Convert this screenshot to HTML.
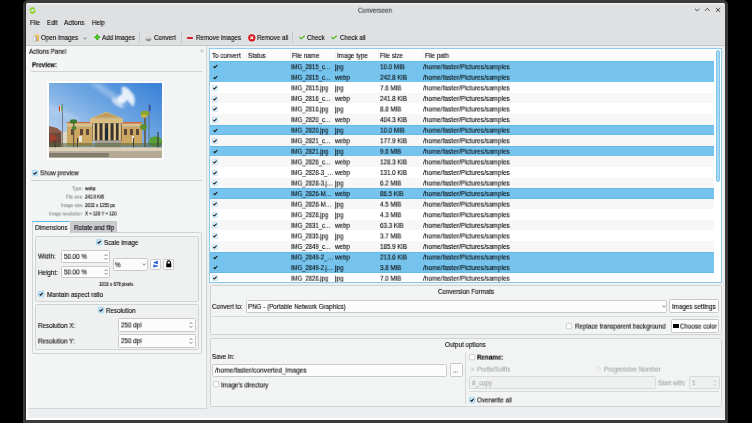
<!DOCTYPE html><html><head><meta charset="utf-8"><style>
html,body{margin:0;padding:0;}
body{width:752px;height:423px;background:#000;position:relative;overflow:hidden;font-family:"Liberation Sans",sans-serif;}
.t{position:absolute;white-space:nowrap;line-height:8px;transform-origin:0 0;will-change:transform;-webkit-text-stroke:0.1px currentColor;}
.r{position:absolute;box-sizing:border-box;}
svg{position:absolute;overflow:visible;}
</style></head><body>
<div class="r" style="left:23.00px;top:0.00px;width:705.00px;height:423.00px;background:#3a3a3a;border-radius:5px 5px 0 0;"></div>
<div class="r" style="left:26.00px;top:3.00px;width:699.00px;height:417.00px;background:#edeef0;border-radius:3px 3px 0 0;"></div>
<div class="r" style="left:26.00px;top:3.00px;width:699.00px;height:42.50px;background:#dfe0e2;border-radius:3px 3px 0 0;"></div>
<div class="r" style="left:26.00px;top:3.00px;width:699.00px;height:2.00px;background:linear-gradient(#f3f4f5,#e2e3e5);border-radius:3px 3px 0 0;"></div>
<div class="r" style="left:26.00px;top:45.00px;width:699.00px;height:1.00px;background:#c6c8c9;"></div>
<div class="r" style="left:26.00px;top:417.80px;width:699.00px;height:2.20px;background:#fcfcfc;"></div>
<div class="t" style="left:358.00px;top:6px;font-size:6.75px;transform:translateY(0.70px) scaleX(0.933);color:#31363b;">Converseen</div>
<svg style="left:29.4px;top:6.6px" width="6.9" height="6.9" viewBox="0 0 8 8"><g stroke="#84d40e" stroke-width="1.9" fill="none"><path d="M1.4 4.6 A2.6 2.6 0 0 1 5.2 1.6"/><path d="M6.6 3.4 A2.6 2.6 0 0 1 2.8 6.4"/></g><path d="M4.4 0 L7.2 1.6 L4.6 3.3Z M3.6 8 L0.8 6.4 L3.4 4.7Z" fill="#84d40e"/></svg>
<svg style="left:694px;top:7px" width="28" height="6" viewBox="0 0 28 6"><path d="M1 1.8 L3.2 3.8 L5.4 1.8" stroke="#474747" stroke-width="0.95" fill="none"/><path d="M11 3.8 L13.3 1.3 L15.6 3.8" stroke="#474747" stroke-width="0.95" fill="none"/><path d="M22 1 L26.2 5 M26.2 1 L22 5" stroke="#474747" stroke-width="0.95" fill="none"/></svg>
<div class="t" style="left:30.20px;top:19px;font-size:6.65px;transform:translateY(0.00px) scaleX(0.933);color:#000;">File</div>
<div class="t" style="left:46.90px;top:19px;font-size:6.65px;transform:translateY(0.00px) scaleX(0.933);color:#000;">Edit</div>
<div class="t" style="left:64.00px;top:19px;font-size:6.65px;transform:translateY(0.00px) scaleX(0.933);color:#000;">Actions</div>
<div class="t" style="left:91.80px;top:19px;font-size:6.65px;transform:translateY(0.00px) scaleX(0.933);color:#000;">Help</div>
<div class="t" style="left:41.00px;top:34px;font-size:6.70px;transform:translateY(0.00px) scaleX(0.933);color:#000;">Open images</div>
<svg style="left:83px;top:36.5px" width="4" height="3" viewBox="0 0 4 3"><path d="M0.3 0.6 L2 2.2 L3.7 0.6" stroke="#555" stroke-width="0.7" fill="none"/></svg>
<div class="t" style="left:101.80px;top:34px;font-size:6.70px;transform:translateY(0.00px) scaleX(0.933);color:#000;">Add images</div>
<div class="t" style="left:153.50px;top:34px;font-size:6.70px;transform:translateY(0.00px) scaleX(0.933);color:#000;">Convert</div>
<div class="t" style="left:195.50px;top:34px;font-size:6.70px;transform:translateY(0.00px) scaleX(0.933);color:#000;">Remove images</div>
<div class="t" style="left:256.80px;top:34px;font-size:6.70px;transform:translateY(0.00px) scaleX(0.933);color:#000;">Remove all</div>
<div class="t" style="left:306.50px;top:34px;font-size:6.70px;transform:translateY(0.00px) scaleX(0.933);color:#000;">Check</div>
<div class="t" style="left:339.90px;top:34px;font-size:6.70px;transform:translateY(0.00px) scaleX(0.933);color:#000;">Check all</div>
<div class="r" style="left:139.00px;top:31.00px;width:0.90px;height:12.00px;background:#c6c7c9;"></div>
<div class="r" style="left:181.30px;top:31.00px;width:0.90px;height:12.00px;background:#c6c7c9;"></div>
<div class="r" style="left:292.30px;top:31.00px;width:0.90px;height:12.00px;background:#c6c7c9;"></div>
<svg style="left:32px;top:33.5px" width="8" height="8" viewBox="0 0 8 8"><defs><linearGradient id="fy" x1="0" y1="0" x2="1" y2="1"><stop offset="0" stop-color="#f7d27a"/><stop offset="1" stop-color="#e9b347"/></linearGradient></defs><rect x="2.2" y="0.6" width="4.8" height="6.6" fill="url(#fy)"/><path d="M1.2 2.6 L4.2 2.6 L4.2 7.2 L1.2 7.2Z" fill="#f4f5f7" stroke="#9a9fa6" stroke-width="0.45"/><rect x="3.9" y="2.2" width="0.6" height="5" fill="#6e7b8c"/></svg>
<svg style="left:93.5px;top:34px" width="6.5" height="6.5" viewBox="0 0 6.5 6.5"><path d="M3.25 1.3 V5.2 M1.3 3.25 H5.2" stroke="#2fae0a" stroke-width="2.0" stroke-linecap="round"/><circle cx="3.25" cy="3.25" r="0.9" fill="#62d92e"/></svg>
<svg style="left:145px;top:34.5px" width="7" height="7" viewBox="0 0 7 7"><path d="M0.8 3.4 A2.7 2.7 0 0 1 6.2 3.4Z" fill="#d8d8d8" opacity="0.7"/><path d="M0.6 3.3 A2.9 2.9 0 0 0 6.4 3.3Z" fill="#8c8c8c"/><ellipse cx="3.5" cy="3.3" rx="2.9" ry="0.9" fill="#c9c9c9"/></svg>
<div class="r" style="left:187.00px;top:36.60px;width:6.20px;height:2.20px;background:#d41f26;border-radius:0.4px;"></div>
<svg style="left:247.5px;top:33.5px" width="8" height="8" viewBox="0 0 8 8"><circle cx="3.8" cy="3.8" r="3.6" fill="#d8121a"/><path d="M2.4 2.4 L5.2 5.2 M5.2 2.4 L2.4 5.2" stroke="#fff" stroke-width="1.1"/></svg>
<svg style="left:298.5px;top:34.5px" width="6" height="5" viewBox="0 0 6 5"><path d="M0.7 2.4 L2.1 3.7 L5.3 1.2" stroke="#46b514" stroke-width="1.2" fill="none" stroke-linecap="round"/></svg>
<svg style="left:331.3px;top:34.5px" width="6" height="5" viewBox="0 0 6 5"><path d="M0.7 2.4 L2.1 3.7 L5.3 1.2" stroke="#46b514" stroke-width="1.2" fill="none" stroke-linecap="round"/></svg>
<div class="r" style="left:26.00px;top:46.00px;width:180.50px;height:362.50px;background:#f3f4f4;border-right:1px solid #d3d5d6;border-bottom:1px solid #d3d5d6;"></div>
<div class="r" style="left:26.00px;top:46.00px;width:3.50px;height:372.00px;background:linear-gradient(to right,#fdfdfd,rgba(243,244,244,0));"></div>
<div class="r" style="left:25.20px;top:3.00px;width:0.90px;height:417.00px;background:#262626;"></div>
<div class="t" style="left:28.80px;top:47px;font-size:6.54px;transform:translateY(0.80px) scaleX(0.933);color:#000;">Actions Panel</div>
<svg style="left:199.5px;top:49px" width="4" height="4" viewBox="0 0 4 4"><path d="M2 0.6 L3.4 2 L2 3.4 L0.6 2Z" fill="none" stroke="#8a8c8e" stroke-width="0.5"/></svg>
<div class="t" style="left:32.00px;top:61px;font-size:6.54px;transform:translateY(0.20px) scaleX(0.933);color:#000;font-weight:bold;">Preview:</div>
<div class="r" style="left:31.00px;top:71.00px;width:171.00px;height:0.80px;background:#d0d2d3;"></div>
<div class="r" style="left:47.30px;top:81.30px;width:116.40px;height:78.40px;background:#fdfdfd;box-shadow:0 0 1px rgba(0,0,0,0.08);"></div>
<svg style="left:49px;top:83px" width="113" height="75" viewBox="0 0 113 75">
<defs>
<linearGradient id="sky" x1="0.9" y1="0" x2="0.2" y2="0.75"><stop offset="0" stop-color="#3d84d8"/><stop offset="0.5" stop-color="#6ea6e2"/><stop offset="1" stop-color="#b0cdee"/></linearGradient>
<filter id="bl" x="-0.5" y="-0.5" width="2" height="2"><feGaussianBlur stdDeviation="1.0"/></filter>
<filter id="bl3" x="-0.5" y="-0.5" width="2" height="2"><feGaussianBlur stdDeviation="2"/></filter>
<filter id="bl2"><feGaussianBlur stdDeviation="0.4"/></filter>
</defs>
<rect width="113" height="75" fill="url(#sky)"/>
<g filter="url(#bl3)" fill="#ffffff" opacity="0.35">
<path d="M40 0 L75 24 L78 20 L50 0Z"/>
<path d="M0 20 L30 35 L30 40 L0 30Z" opacity="0.5"/>
</g>
<g filter="url(#bl)" fill="#ffffff">
<path d="M73 4 C77 3 80 6 82 9 C86 12 87 18 84 24 C82 21 80 19 78 17 C76 20 72 22 70 19 C67 17 68 13 72 12 C74 10 72 7 73 4Z" opacity="0.85"/>
<path d="M64 14 C68 16 72 20 75 25 C71 25 66 22 63 18Z" opacity="0.6"/>
</g>
<g filter="url(#bl2)">
<path d="M0 43 L8 45 L13 49 L13 64 L0 64Z" fill="#8a5a48"/>
<rect x="0" y="50" width="12" height="14" fill="#6a4a3c"/>
<path d="M1 52 Q4 50 7 53 Q9 56 6 58 L1 58Z" fill="#b83a2a" opacity="0.7"/>
<rect x="12.5" y="49" width="6" height="15" fill="#ddd6c8"/>
<rect x="18" y="39" width="25.5" height="1.6" fill="#cf6a3a"/>
<rect x="18" y="40.4" width="25.5" height="3.2" fill="#dcc089"/>
<rect x="18" y="43.6" width="25.5" height="19.5" fill="#cda863"/>
<rect x="72" y="39" width="21" height="1.8" fill="#cf6a3a"/>
<rect x="72" y="40.6" width="21" height="3" fill="#dcc089"/>
<rect x="72" y="43.6" width="21" height="19" fill="#cda863"/>
<g fill="#5b4a3a"><rect x="22" y="46" width="3" height="6"/><rect x="31" y="46" width="3" height="6"/><rect x="37" y="46" width="3" height="6"/><rect x="75" y="46" width="3" height="6"/><rect x="81" y="46" width="3" height="6"/><rect x="87" y="46" width="3" height="6"/></g>
<g fill="#e8e4dc"><rect x="30" y="53" width="3" height="6"/><rect x="83" y="53" width="2" height="6"/></g>
<path d="M41 35.4 L57.3 28.8 L73.8 35.4 Z" fill="#d9b877"/>
<path d="M44.5 34.6 L57.3 29.8 L70.2 34.6 Z" fill="#bf9b5c"/>
<rect x="41" y="35.4" width="32.8" height="4.9" fill="#dbbd80"/>
<rect x="43" y="40.3" width="29.5" height="17.3" fill="#3b3129"/>
<g fill="#e2c790"><rect x="43.5" y="40.3" width="2.3" height="17.3"/><rect x="48.2" y="40.3" width="2.3" height="17.3"/><rect x="53.5" y="40.3" width="2.3" height="17.3"/><rect x="59.2" y="40.3" width="2.3" height="17.3"/><rect x="64.6" y="40.3" width="2.3" height="17.3"/><rect x="69.6" y="40.3" width="2.3" height="17.3"/></g>
<rect x="56" y="45" width="3" height="12.6" fill="#1f2a33"/>
<rect x="46" y="57.6" width="26" height="7" fill="#a9a397"/>
<rect x="46" y="60" width="26" height="0.6" fill="#8f897e"/><rect x="46" y="62" width="26" height="0.6" fill="#8f897e"/>
<rect x="13.2" y="21" width="0.7" height="43" fill="#5a5a5a"/>
<path d="M10 23 L13.2 22 L13.2 28 L10 28.5Z" fill="#f2f2f2"/>
<path d="M10 23 L11.2 22.6 L11.2 28.4 L10 28.5Z" fill="#d63a2a"/>
<path d="M12.2 22.2 L13.2 22 L13.2 28 L12.2 28.1Z" fill="#3fa33f"/>
<rect x="99.7" y="21" width="0.7" height="43" fill="#5a5a5a"/>
<path d="M100.4 21.5 L101.6 22.5 L101.4 28.5 L100.4 28Z" fill="#2a3c9a"/>
<rect x="24" y="38" width="1.3" height="26" fill="#6b5a3a"/>
<ellipse cx="24.5" cy="38.5" rx="3.6" ry="2.2" fill="#3e7a2a"/>
<ellipse cx="25.2" cy="45" rx="2.4" ry="2" fill="#4f8634"/>
<rect x="95.2" y="30" width="1.6" height="34" fill="#6b5638"/>
<ellipse cx="96" cy="30.5" rx="4.3" ry="2.8" fill="#8aa52a"/>
<ellipse cx="95" cy="33" rx="3" ry="1.8" fill="#c7b545"/>
<ellipse cx="94.5" cy="44" rx="3.5" ry="3" fill="#5e8f2e"/>
<ellipse cx="106.5" cy="58.5" rx="6.8" ry="5.3" fill="#58a03a"/>
<rect x="0" y="60" width="113" height="4.4" fill="#4c5e34" opacity="0.5"/>
<rect x="108.4" y="49" width="1.2" height="19" fill="#3a3a3a"/>
<rect x="28" y="55" width="1" height="12" fill="#3a3a3a"/><rect x="84" y="55" width="1" height="12" fill="#3a3a3a"/><rect x="5.5" y="57" width="1" height="10" fill="#3a3a3a"/>
</g>
<rect x="0" y="64.4" width="113" height="4" fill="#ddd0b4"/>
<rect x="0" y="68.2" width="113" height="6.8" fill="#b5aa94"/>
<rect x="0" y="70" width="60" height="4" fill="#857d70" filter="url(#bl2)"/>
</svg>
<svg style="left:31.80px;top:169.80px" width="7" height="7" viewBox="0 0 7 7"><rect x="0.4" y="0.4" width="5.4" height="5.4" rx="0.7" fill="#c4e5f8" stroke="#9dd3f3" stroke-width="0.75"/><path d="M1.6 3.1 L2.7 4.2 L4.7 1.9" stroke="#1b1e20" stroke-width="1.15" fill="none"/></svg>
<div class="t" style="left:39.80px;top:169px;font-size:6.70px;transform:translateY(0.30px) scaleX(0.933);color:#000;">Show preview</div>
<div class="r" style="left:31.00px;top:180.00px;width:171.00px;height:0.80px;background:#d0d2d3;"></div>
<div class="t" style="left:72.34px;top:185px;font-size:4.72px;transform:translateY(0.20px) scaleX(0.933);color:#8e9194;">Type:</div>
<div class="t" style="left:85.40px;top:185px;font-size:4.72px;transform:translateY(0.20px) scaleX(0.933);color:#000;">webp</div>
<div class="t" style="left:65.74px;top:193px;font-size:4.72px;transform:translateY(0.60px) scaleX(0.933);color:#8e9194;">File size:</div>
<div class="t" style="left:85.40px;top:193px;font-size:4.72px;transform:translateY(0.60px) scaleX(0.933);color:#000;">242.8 KiB</div>
<div class="t" style="left:60.60px;top:202px;font-size:4.72px;transform:translateY(0.10px) scaleX(0.933);color:#8e9194;">Image size:</div>
<div class="t" style="left:85.40px;top:202px;font-size:4.72px;transform:translateY(0.10px) scaleX(0.933);color:#000;">2032 x 1355 px</div>
<div class="t" style="left:49.35px;top:210px;font-size:4.72px;transform:translateY(0.50px) scaleX(0.933);color:#8e9194;">Image resolution:</div>
<div class="t" style="left:85.40px;top:210px;font-size:4.72px;transform:translateY(0.50px) scaleX(0.933);color:#000;">X = 120 Y = 120</div>
<div class="r" style="left:31.55px;top:231.75px;width:170.90px;height:122.40px;background:#f4f5f5;border:1px solid #d1d3d4;border-radius:1px;"></div>
<div class="r" style="left:31.75px;top:220.85px;width:38.90px;height:12.90px;background:#f4f5f5;border:1px solid #d1d3d4;border-bottom:none;border-radius:1.5px 1.5px 0 0;"></div>
<div class="r" style="left:32.40px;top:220.90px;width:37.80px;height:1.60px;background:#5ab7ec;border-radius:1px 1px 0 0;"></div>
<div class="r" style="left:69.75px;top:221.45px;width:47.40px;height:11.40px;background:#cbcccf;border:1px solid #c2c4c6;border-bottom:none;border-radius:1.5px 1.5px 0 0;"></div>
<div class="t" style="left:34.90px;top:224px;font-size:6.70px;transform:translateY(0.00px) scaleX(0.933);color:#000;">Dimensions</div>
<div class="t" style="left:73.50px;top:224px;font-size:6.70px;transform:translateY(0.00px) scaleX(0.933);color:#000;">Rotate and flip</div>
<div class="r" style="left:34.75px;top:236.15px;width:163.90px;height:65.40px;background:#eff0f0;border:1px solid #d1d3d4;border-radius:1.5px;"></div>
<svg style="left:96.20px;top:239.20px" width="7" height="7" viewBox="0 0 7 7"><rect x="0.4" y="0.4" width="5.4" height="5.4" rx="0.7" fill="#c4e5f8" stroke="#9dd3f3" stroke-width="0.75"/><path d="M1.6 3.1 L2.7 4.2 L4.7 1.9" stroke="#1b1e20" stroke-width="1.15" fill="none"/></svg>
<div class="t" style="left:104.00px;top:239px;font-size:6.70px;transform:translateY(0.00px) scaleX(0.933);color:#000;">Scale image</div>
<div class="t" style="left:38.00px;top:252px;font-size:6.70px;transform:translateY(0.60px) scaleX(0.933);color:#000;">Width:</div>
<div class="r" style="left:61.05px;top:250.35px;width:49.20px;height:12.40px;background:#fcfcfc;border:1px solid #c7c9cb;border-radius:1.5px;"></div>
<div class="t" style="left:64.10px;top:252px;font-size:6.70px;transform:translateY(0.85px) scaleX(0.933);color:#000;">50.00 %</div>
<svg style="left:103.8px;top:252.55px" width="4" height="8" viewBox="0 0 4 8"><path d="M0.5 3 L2 1.5 L3.5 3 M0.5 5 L2 6.5 L3.5 5" stroke="#3c3f42" stroke-width="0.6" fill="none"/></svg>
<div class="t" style="left:38.00px;top:269px;font-size:6.70px;transform:translateY(0.00px) scaleX(0.933);color:#000;">Height:</div>
<div class="r" style="left:61.05px;top:265.75px;width:49.20px;height:12.70px;background:#fcfcfc;border:1px solid #c7c9cb;border-radius:1.5px;"></div>
<div class="t" style="left:64.10px;top:268px;font-size:6.70px;transform:translateY(0.40px) scaleX(0.933);color:#000;">50.00 %</div>
<svg style="left:103.8px;top:268.09999999999997px" width="4" height="8" viewBox="0 0 4 8"><path d="M0.5 3 L2 1.5 L3.5 3 M0.5 5 L2 6.5 L3.5 5" stroke="#3c3f42" stroke-width="0.6" fill="none"/></svg>
<div class="r" style="left:112.85px;top:257.95px;width:35.10px;height:12.90px;background:#fcfcfc;border:1px solid #c7c9cb;border-radius:1.5px;"></div>
<div class="t" style="left:115.00px;top:261px;font-size:6.70px;transform:translateY(0.30px) scaleX(0.933);color:#000;">%</div>
<svg style="left:141.5px;top:263px" width="4" height="3" viewBox="0 0 4 3"><path d="M0.3 0.6 L2 2.2 L3.7 0.6" stroke="#4a4d50" stroke-width="0.7" fill="none"/></svg>
<div class="r" style="left:150.25px;top:258.85px;width:10.90px;height:11.20px;background:#fcfcfc;border:1px solid #c7c9cb;border-radius:1.5px;"></div>
<svg style="left:150px;top:258px" width="12" height="12" viewBox="0 0 12 12"><path d="M3.6 4.6 L7.6 3.1 L7.6 5.9 Z" fill="#1d56d8" stroke="#1d56d8" stroke-width="0.5" stroke-linejoin="round"/><path d="M3.7 6.9 L3.7 9.2 L8 8.0 Z" fill="#1d56d8" stroke="#1d56d8" stroke-width="0.5" stroke-linejoin="round"/></svg>
<div class="r" style="left:163.15px;top:258.85px;width:11.10px;height:11.20px;background:#fcfcfc;border:1px solid #c7c9cb;border-radius:1.5px;"></div>
<svg style="left:163px;top:258px" width="12" height="12" viewBox="0 0 12 12"><path d="M4 5.6 V4.6 A1.75 1.75 0 0 1 7.5 4.6 V5.6" stroke="#000" stroke-width="1.1" fill="none"/><rect x="3.2" y="5.3" width="5.1" height="3.9" rx="0.5" fill="#000"/><circle cx="5.75" cy="4.9" r="0.6" fill="#fff"/></svg>
<div class="t" style="left:99.20px;top:280px;font-size:4.72px;transform:translateY(0.90px) scaleX(0.933);color:#000;">1016 x 678 pixels</div>
<svg style="left:38.40px;top:291.20px" width="7" height="7" viewBox="0 0 7 7"><rect x="0.4" y="0.4" width="5.4" height="5.4" rx="0.7" fill="#c4e5f8" stroke="#9dd3f3" stroke-width="0.75"/><path d="M1.6 3.1 L2.7 4.2 L4.7 1.9" stroke="#1b1e20" stroke-width="1.15" fill="none"/></svg>
<div class="t" style="left:46.90px;top:291px;font-size:6.70px;transform:translateY(0.00px) scaleX(0.933);color:#000;">Mantain aspect ratio</div>
<div class="r" style="left:34.75px;top:304.45px;width:163.90px;height:45.20px;background:#eff0f0;border:1px solid #d1d3d4;border-radius:1.5px;"></div>
<svg style="left:97.90px;top:307.20px" width="7" height="7" viewBox="0 0 7 7"><rect x="0.4" y="0.4" width="5.4" height="5.4" rx="0.7" fill="#c4e5f8" stroke="#9dd3f3" stroke-width="0.75"/><path d="M1.6 3.1 L2.7 4.2 L4.7 1.9" stroke="#1b1e20" stroke-width="1.15" fill="none"/></svg>
<div class="t" style="left:105.80px;top:307px;font-size:6.70px;transform:translateY(0.00px) scaleX(0.933);color:#000;">Resolution</div>
<div class="t" style="left:38.00px;top:322px;font-size:6.70px;transform:translateY(0.00px) scaleX(0.933);color:#000;">Resolution X:</div>
<div class="r" style="left:117.95px;top:318.15px;width:77.90px;height:13.90px;background:#fcfcfc;border:1px solid #c7c9cb;border-radius:1.5px;"></div>
<div class="t" style="left:121.00px;top:321px;font-size:6.70px;transform:translateY(0.40px) scaleX(0.933);color:#000;">250 dpi</div>
<svg style="left:189.4px;top:321.1px" width="4" height="8" viewBox="0 0 4 8"><path d="M0.5 3 L2 1.5 L3.5 3 M0.5 5 L2 6.5 L3.5 5" stroke="#3c3f42" stroke-width="0.6" fill="none"/></svg>
<div class="t" style="left:38.00px;top:337px;font-size:6.70px;transform:translateY(0.50px) scaleX(0.933);color:#000;">Resolution Y:</div>
<div class="r" style="left:117.95px;top:334.15px;width:77.90px;height:13.40px;background:#fcfcfc;border:1px solid #c7c9cb;border-radius:1.5px;"></div>
<div class="t" style="left:121.00px;top:337px;font-size:6.70px;transform:translateY(0.15px) scaleX(0.933);color:#000;">250 dpi</div>
<svg style="left:189.4px;top:336.85px" width="4" height="8" viewBox="0 0 4 8"><path d="M0.5 3 L2 1.5 L3.5 3 M0.5 5 L2 6.5 L3.5 5" stroke="#3c3f42" stroke-width="0.6" fill="none"/></svg>
<div class="r" style="left:209.35px;top:48.05px;width:512.60px;height:234.90px;background:#fff;border:1px solid #8ccbed;"></div>
<div class="r" style="left:209.35px;top:48.05px;width:512.60px;height:13.60px;background:#fcfcfc;border:1px solid #8ccbed;border-bottom:0;"></div>
<div class="r" style="left:245.60px;top:50.00px;width:0.70px;height:10.00px;background:#eeeff0;"></div>
<div class="r" style="left:289.70px;top:50.00px;width:0.70px;height:10.00px;background:#eeeff0;"></div>
<div class="r" style="left:334.50px;top:50.00px;width:0.70px;height:10.00px;background:#eeeff0;"></div>
<div class="r" style="left:377.70px;top:50.00px;width:0.70px;height:10.00px;background:#eeeff0;"></div>
<div class="r" style="left:421.80px;top:50.00px;width:0.70px;height:10.00px;background:#eeeff0;"></div>
<div class="t" style="left:212.30px;top:51px;font-size:6.70px;transform:translateY(0.90px) scaleX(0.933);color:#000;">To convert</div>
<div class="t" style="left:248.20px;top:51px;font-size:6.70px;transform:translateY(0.90px) scaleX(0.933);color:#000;">Status</div>
<div class="t" style="left:292.30px;top:51px;font-size:6.70px;transform:translateY(0.90px) scaleX(0.933);color:#000;">File name</div>
<div class="t" style="left:336.60px;top:51px;font-size:6.70px;transform:translateY(0.90px) scaleX(0.933);color:#000;">Image type</div>
<div class="t" style="left:380.30px;top:51px;font-size:6.70px;transform:translateY(0.90px) scaleX(0.933);color:#000;">File size</div>
<div class="t" style="left:424.70px;top:51px;font-size:6.70px;transform:translateY(0.90px) scaleX(0.933);color:#000;">File path</div>
<div style="position:absolute;left:0;top:0;width:752px;height:423px;clip-path:inset(49.4px 31.5px 141.2px 209.6px)">
<div class="r" style="left:209.80px;top:61.20px;width:504.50px;height:10.57px;background:#76c4ee;"></div>
<div class="r" style="left:209.80px;top:61.20px;width:504.50px;height:0.80px;background:#64b9e8;"></div>
<svg style="left:212.5px;top:64.40px" width="5" height="5" viewBox="0 0 5 5"><path d="M0.6 2.5 L1.8 3.7 L4.2 1.1" stroke="#1b1e20" stroke-width="1.2" fill="none"/></svg>
<div class="t" style="left:291.20px;top:63px;font-size:6.70px;transform:translateY(0.20px) scaleX(0.886);color:#000;">IMG_2815_c…</div>
<div class="t" style="left:335.30px;top:63px;font-size:6.70px;transform:translateY(0.20px) scaleX(0.933);color:#000;">jpg</div>
<div class="t" style="left:379.90px;top:63px;font-size:6.70px;transform:translateY(0.20px) scaleX(0.933);color:#000;">10.0 MiB</div>
<div class="t" style="left:423.10px;top:63px;font-size:6.70px;transform:translateY(0.20px) scaleX(0.965);color:#000;">/home/faster/Pictures/samples</div>
<div class="r" style="left:209.80px;top:71.78px;width:504.50px;height:10.57px;background:#76c4ee;"></div>
<div class="r" style="left:209.80px;top:81.55px;width:504.50px;height:0.80px;background:#64b9e8;"></div>
<svg style="left:212.5px;top:74.98px" width="5" height="5" viewBox="0 0 5 5"><path d="M0.6 2.5 L1.8 3.7 L4.2 1.1" stroke="#1b1e20" stroke-width="1.2" fill="none"/></svg>
<div class="t" style="left:291.20px;top:73px;font-size:6.70px;transform:translateY(0.78px) scaleX(0.886);color:#000;">IMG_2815_c…</div>
<div class="t" style="left:335.30px;top:73px;font-size:6.70px;transform:translateY(0.78px) scaleX(0.933);color:#000;">webp</div>
<div class="t" style="left:379.90px;top:73px;font-size:6.70px;transform:translateY(0.78px) scaleX(0.933);color:#000;">242.8 KiB</div>
<div class="t" style="left:423.10px;top:73px;font-size:6.70px;transform:translateY(0.78px) scaleX(0.965);color:#000;">/home/faster/Pictures/samples</div>
<div class="r" style="left:209.80px;top:82.35px;width:504.50px;height:10.57px;background:#ffffff;"></div>
<svg style="left:212px;top:84.95px" width="6" height="6" viewBox="0 0 6 6"><rect x="0.3" y="0.3" width="5.2" height="5.2" rx="0.6" fill="#e4f2fa" stroke="#a8d6f0" stroke-width="0.5"/><path d="M1.3 2.9 L2.4 4 L4.6 1.6" stroke="#1b1e20" stroke-width="1.1" fill="none"/></svg>
<div class="t" style="left:291.20px;top:84px;font-size:6.70px;transform:translateY(0.35px) scaleX(0.886);color:#000;">IMG_2815.jpg</div>
<div class="t" style="left:335.30px;top:84px;font-size:6.70px;transform:translateY(0.35px) scaleX(0.933);color:#000;">jpg</div>
<div class="t" style="left:379.90px;top:84px;font-size:6.70px;transform:translateY(0.35px) scaleX(0.933);color:#000;">7.6 MiB</div>
<div class="t" style="left:423.10px;top:84px;font-size:6.70px;transform:translateY(0.35px) scaleX(0.965);color:#000;">/home/faster/Pictures/samples</div>
<div class="r" style="left:209.80px;top:92.92px;width:504.50px;height:10.57px;background:#f7f7f7;"></div>
<svg style="left:212px;top:95.52px" width="6" height="6" viewBox="0 0 6 6"><rect x="0.3" y="0.3" width="5.2" height="5.2" rx="0.6" fill="#e4f2fa" stroke="#a8d6f0" stroke-width="0.5"/><path d="M1.3 2.9 L2.4 4 L4.6 1.6" stroke="#1b1e20" stroke-width="1.1" fill="none"/></svg>
<div class="t" style="left:291.20px;top:94px;font-size:6.70px;transform:translateY(0.92px) scaleX(0.886);color:#000;">IMG_2816_c…</div>
<div class="t" style="left:335.30px;top:94px;font-size:6.70px;transform:translateY(0.92px) scaleX(0.933);color:#000;">webp</div>
<div class="t" style="left:379.90px;top:94px;font-size:6.70px;transform:translateY(0.92px) scaleX(0.933);color:#000;">241.8 KiB</div>
<div class="t" style="left:423.10px;top:94px;font-size:6.70px;transform:translateY(0.92px) scaleX(0.965);color:#000;">/home/faster/Pictures/samples</div>
<div class="r" style="left:209.80px;top:103.50px;width:504.50px;height:10.57px;background:#ffffff;"></div>
<svg style="left:212px;top:106.10px" width="6" height="6" viewBox="0 0 6 6"><rect x="0.3" y="0.3" width="5.2" height="5.2" rx="0.6" fill="#e4f2fa" stroke="#a8d6f0" stroke-width="0.5"/><path d="M1.3 2.9 L2.4 4 L4.6 1.6" stroke="#1b1e20" stroke-width="1.1" fill="none"/></svg>
<div class="t" style="left:291.20px;top:105px;font-size:6.70px;transform:translateY(0.50px) scaleX(0.886);color:#000;">IMG_2816.jpg</div>
<div class="t" style="left:335.30px;top:105px;font-size:6.70px;transform:translateY(0.50px) scaleX(0.933);color:#000;">jpg</div>
<div class="t" style="left:379.90px;top:105px;font-size:6.70px;transform:translateY(0.50px) scaleX(0.933);color:#000;">8.8 MiB</div>
<div class="t" style="left:423.10px;top:105px;font-size:6.70px;transform:translateY(0.50px) scaleX(0.965);color:#000;">/home/faster/Pictures/samples</div>
<div class="r" style="left:209.80px;top:114.08px;width:504.50px;height:10.57px;background:#f7f7f7;"></div>
<svg style="left:212px;top:116.67px" width="6" height="6" viewBox="0 0 6 6"><rect x="0.3" y="0.3" width="5.2" height="5.2" rx="0.6" fill="#e4f2fa" stroke="#a8d6f0" stroke-width="0.5"/><path d="M1.3 2.9 L2.4 4 L4.6 1.6" stroke="#1b1e20" stroke-width="1.1" fill="none"/></svg>
<div class="t" style="left:291.20px;top:116px;font-size:6.70px;transform:translateY(0.08px) scaleX(0.886);color:#000;">IMG_2820_c…</div>
<div class="t" style="left:335.30px;top:116px;font-size:6.70px;transform:translateY(0.08px) scaleX(0.933);color:#000;">webp</div>
<div class="t" style="left:379.90px;top:116px;font-size:6.70px;transform:translateY(0.08px) scaleX(0.933);color:#000;">404.3 KiB</div>
<div class="t" style="left:423.10px;top:116px;font-size:6.70px;transform:translateY(0.08px) scaleX(0.965);color:#000;">/home/faster/Pictures/samples</div>
<div class="r" style="left:209.80px;top:124.65px;width:504.50px;height:10.57px;background:#76c4ee;"></div>
<div class="r" style="left:209.80px;top:124.65px;width:504.50px;height:0.80px;background:#64b9e8;"></div>
<div class="r" style="left:209.80px;top:134.42px;width:504.50px;height:0.80px;background:#64b9e8;"></div>
<svg style="left:212.5px;top:127.85px" width="5" height="5" viewBox="0 0 5 5"><path d="M0.6 2.5 L1.8 3.7 L4.2 1.1" stroke="#1b1e20" stroke-width="1.2" fill="none"/></svg>
<div class="t" style="left:291.20px;top:126px;font-size:6.70px;transform:translateY(0.65px) scaleX(0.886);color:#000;">IMG_2820.jpg</div>
<div class="t" style="left:335.30px;top:126px;font-size:6.70px;transform:translateY(0.65px) scaleX(0.933);color:#000;">jpg</div>
<div class="t" style="left:379.90px;top:126px;font-size:6.70px;transform:translateY(0.65px) scaleX(0.933);color:#000;">10.0 MiB</div>
<div class="t" style="left:423.10px;top:126px;font-size:6.70px;transform:translateY(0.65px) scaleX(0.965);color:#000;">/home/faster/Pictures/samples</div>
<div class="r" style="left:209.80px;top:135.22px;width:504.50px;height:10.57px;background:#f7f7f7;"></div>
<svg style="left:212px;top:137.82px" width="6" height="6" viewBox="0 0 6 6"><rect x="0.3" y="0.3" width="5.2" height="5.2" rx="0.6" fill="#e4f2fa" stroke="#a8d6f0" stroke-width="0.5"/><path d="M1.3 2.9 L2.4 4 L4.6 1.6" stroke="#1b1e20" stroke-width="1.1" fill="none"/></svg>
<div class="t" style="left:291.20px;top:137px;font-size:6.70px;transform:translateY(0.22px) scaleX(0.886);color:#000;">IMG_2821_c…</div>
<div class="t" style="left:335.30px;top:137px;font-size:6.70px;transform:translateY(0.22px) scaleX(0.933);color:#000;">webp</div>
<div class="t" style="left:379.90px;top:137px;font-size:6.70px;transform:translateY(0.22px) scaleX(0.933);color:#000;">177.9 KiB</div>
<div class="t" style="left:423.10px;top:137px;font-size:6.70px;transform:translateY(0.22px) scaleX(0.965);color:#000;">/home/faster/Pictures/samples</div>
<div class="r" style="left:209.80px;top:145.80px;width:504.50px;height:10.57px;background:#76c4ee;"></div>
<div class="r" style="left:209.80px;top:145.80px;width:504.50px;height:0.80px;background:#64b9e8;"></div>
<div class="r" style="left:209.80px;top:155.57px;width:504.50px;height:0.80px;background:#64b9e8;"></div>
<svg style="left:212.5px;top:149.00px" width="5" height="5" viewBox="0 0 5 5"><path d="M0.6 2.5 L1.8 3.7 L4.2 1.1" stroke="#1b1e20" stroke-width="1.2" fill="none"/></svg>
<div class="t" style="left:291.20px;top:147px;font-size:6.70px;transform:translateY(0.80px) scaleX(0.886);color:#000;">IMG_2821.jpg</div>
<div class="t" style="left:335.30px;top:147px;font-size:6.70px;transform:translateY(0.80px) scaleX(0.933);color:#000;">jpg</div>
<div class="t" style="left:379.90px;top:147px;font-size:6.70px;transform:translateY(0.80px) scaleX(0.933);color:#000;">9.6 MiB</div>
<div class="t" style="left:423.10px;top:147px;font-size:6.70px;transform:translateY(0.80px) scaleX(0.965);color:#000;">/home/faster/Pictures/samples</div>
<div class="r" style="left:209.80px;top:156.38px;width:504.50px;height:10.57px;background:#f7f7f7;"></div>
<svg style="left:212px;top:158.97px" width="6" height="6" viewBox="0 0 6 6"><rect x="0.3" y="0.3" width="5.2" height="5.2" rx="0.6" fill="#e4f2fa" stroke="#a8d6f0" stroke-width="0.5"/><path d="M1.3 2.9 L2.4 4 L4.6 1.6" stroke="#1b1e20" stroke-width="1.1" fill="none"/></svg>
<div class="t" style="left:291.20px;top:158px;font-size:6.70px;transform:translateY(0.38px) scaleX(0.886);color:#000;">IMG_2826_c…</div>
<div class="t" style="left:335.30px;top:158px;font-size:6.70px;transform:translateY(0.38px) scaleX(0.933);color:#000;">webp</div>
<div class="t" style="left:379.90px;top:158px;font-size:6.70px;transform:translateY(0.38px) scaleX(0.933);color:#000;">128.3 KiB</div>
<div class="t" style="left:423.10px;top:158px;font-size:6.70px;transform:translateY(0.38px) scaleX(0.965);color:#000;">/home/faster/Pictures/samples</div>
<div class="r" style="left:209.80px;top:166.95px;width:504.50px;height:10.57px;background:#ffffff;"></div>
<svg style="left:212px;top:169.55px" width="6" height="6" viewBox="0 0 6 6"><rect x="0.3" y="0.3" width="5.2" height="5.2" rx="0.6" fill="#e4f2fa" stroke="#a8d6f0" stroke-width="0.5"/><path d="M1.3 2.9 L2.4 4 L4.6 1.6" stroke="#1b1e20" stroke-width="1.1" fill="none"/></svg>
<div class="t" style="left:291.20px;top:168px;font-size:6.70px;transform:translateY(0.95px) scaleX(0.886);color:#000;">IMG_2828-3_…</div>
<div class="t" style="left:335.30px;top:168px;font-size:6.70px;transform:translateY(0.95px) scaleX(0.933);color:#000;">webp</div>
<div class="t" style="left:379.90px;top:168px;font-size:6.70px;transform:translateY(0.95px) scaleX(0.933);color:#000;">131.0 KiB</div>
<div class="t" style="left:423.10px;top:168px;font-size:6.70px;transform:translateY(0.95px) scaleX(0.965);color:#000;">/home/faster/Pictures/samples</div>
<div class="r" style="left:209.80px;top:177.52px;width:504.50px;height:10.57px;background:#f7f7f7;"></div>
<svg style="left:212px;top:180.12px" width="6" height="6" viewBox="0 0 6 6"><rect x="0.3" y="0.3" width="5.2" height="5.2" rx="0.6" fill="#e4f2fa" stroke="#a8d6f0" stroke-width="0.5"/><path d="M1.3 2.9 L2.4 4 L4.6 1.6" stroke="#1b1e20" stroke-width="1.1" fill="none"/></svg>
<div class="t" style="left:291.20px;top:179px;font-size:6.70px;transform:translateY(0.52px) scaleX(0.886);color:#000;">IMG_2828-3.j…</div>
<div class="t" style="left:335.30px;top:179px;font-size:6.70px;transform:translateY(0.52px) scaleX(0.933);color:#000;">jpg</div>
<div class="t" style="left:379.90px;top:179px;font-size:6.70px;transform:translateY(0.52px) scaleX(0.933);color:#000;">6.2 MiB</div>
<div class="t" style="left:423.10px;top:179px;font-size:6.70px;transform:translateY(0.52px) scaleX(0.965);color:#000;">/home/faster/Pictures/samples</div>
<div class="r" style="left:209.80px;top:188.10px;width:504.50px;height:10.57px;background:#76c4ee;"></div>
<div class="r" style="left:209.80px;top:188.10px;width:504.50px;height:0.80px;background:#64b9e8;"></div>
<div class="r" style="left:209.80px;top:197.87px;width:504.50px;height:0.80px;background:#64b9e8;"></div>
<svg style="left:212.5px;top:191.30px" width="5" height="5" viewBox="0 0 5 5"><path d="M0.6 2.5 L1.8 3.7 L4.2 1.1" stroke="#1b1e20" stroke-width="1.2" fill="none"/></svg>
<div class="t" style="left:291.20px;top:190px;font-size:6.70px;transform:translateY(0.10px) scaleX(0.886);color:#000;">IMG_2826-M…</div>
<div class="t" style="left:335.30px;top:190px;font-size:6.70px;transform:translateY(0.10px) scaleX(0.933);color:#000;">webp</div>
<div class="t" style="left:379.90px;top:190px;font-size:6.70px;transform:translateY(0.10px) scaleX(0.933);color:#000;">86.5 KiB</div>
<div class="t" style="left:423.10px;top:190px;font-size:6.70px;transform:translateY(0.10px) scaleX(0.965);color:#000;">/home/faster/Pictures/samples</div>
<div class="r" style="left:209.80px;top:198.68px;width:504.50px;height:10.57px;background:#f7f7f7;"></div>
<svg style="left:212px;top:201.28px" width="6" height="6" viewBox="0 0 6 6"><rect x="0.3" y="0.3" width="5.2" height="5.2" rx="0.6" fill="#e4f2fa" stroke="#a8d6f0" stroke-width="0.5"/><path d="M1.3 2.9 L2.4 4 L4.6 1.6" stroke="#1b1e20" stroke-width="1.1" fill="none"/></svg>
<div class="t" style="left:291.20px;top:200px;font-size:6.70px;transform:translateY(0.68px) scaleX(0.886);color:#000;">IMG_2826-M…</div>
<div class="t" style="left:335.30px;top:200px;font-size:6.70px;transform:translateY(0.68px) scaleX(0.933);color:#000;">jpg</div>
<div class="t" style="left:379.90px;top:200px;font-size:6.70px;transform:translateY(0.68px) scaleX(0.933);color:#000;">4.5 MiB</div>
<div class="t" style="left:423.10px;top:200px;font-size:6.70px;transform:translateY(0.68px) scaleX(0.965);color:#000;">/home/faster/Pictures/samples</div>
<div class="r" style="left:209.80px;top:209.25px;width:504.50px;height:10.57px;background:#ffffff;"></div>
<svg style="left:212px;top:211.85px" width="6" height="6" viewBox="0 0 6 6"><rect x="0.3" y="0.3" width="5.2" height="5.2" rx="0.6" fill="#e4f2fa" stroke="#a8d6f0" stroke-width="0.5"/><path d="M1.3 2.9 L2.4 4 L4.6 1.6" stroke="#1b1e20" stroke-width="1.1" fill="none"/></svg>
<div class="t" style="left:291.20px;top:211px;font-size:6.70px;transform:translateY(0.25px) scaleX(0.886);color:#000;">IMG_2828.jpg</div>
<div class="t" style="left:335.30px;top:211px;font-size:6.70px;transform:translateY(0.25px) scaleX(0.933);color:#000;">jpg</div>
<div class="t" style="left:379.90px;top:211px;font-size:6.70px;transform:translateY(0.25px) scaleX(0.933);color:#000;">4.3 MiB</div>
<div class="t" style="left:423.10px;top:211px;font-size:6.70px;transform:translateY(0.25px) scaleX(0.965);color:#000;">/home/faster/Pictures/samples</div>
<div class="r" style="left:209.80px;top:219.82px;width:504.50px;height:10.57px;background:#f7f7f7;"></div>
<svg style="left:212px;top:222.42px" width="6" height="6" viewBox="0 0 6 6"><rect x="0.3" y="0.3" width="5.2" height="5.2" rx="0.6" fill="#e4f2fa" stroke="#a8d6f0" stroke-width="0.5"/><path d="M1.3 2.9 L2.4 4 L4.6 1.6" stroke="#1b1e20" stroke-width="1.1" fill="none"/></svg>
<div class="t" style="left:291.20px;top:221px;font-size:6.70px;transform:translateY(0.82px) scaleX(0.886);color:#000;">IMG_2831_c…</div>
<div class="t" style="left:335.30px;top:221px;font-size:6.70px;transform:translateY(0.82px) scaleX(0.933);color:#000;">webp</div>
<div class="t" style="left:379.90px;top:221px;font-size:6.70px;transform:translateY(0.82px) scaleX(0.933);color:#000;">63.3 KiB</div>
<div class="t" style="left:423.10px;top:221px;font-size:6.70px;transform:translateY(0.82px) scaleX(0.965);color:#000;">/home/faster/Pictures/samples</div>
<div class="r" style="left:209.80px;top:230.40px;width:504.50px;height:10.57px;background:#ffffff;"></div>
<svg style="left:212px;top:233.00px" width="6" height="6" viewBox="0 0 6 6"><rect x="0.3" y="0.3" width="5.2" height="5.2" rx="0.6" fill="#e4f2fa" stroke="#a8d6f0" stroke-width="0.5"/><path d="M1.3 2.9 L2.4 4 L4.6 1.6" stroke="#1b1e20" stroke-width="1.1" fill="none"/></svg>
<div class="t" style="left:291.20px;top:232px;font-size:6.70px;transform:translateY(0.40px) scaleX(0.886);color:#000;">IMG_2835.jpg</div>
<div class="t" style="left:335.30px;top:232px;font-size:6.70px;transform:translateY(0.40px) scaleX(0.933);color:#000;">jpg</div>
<div class="t" style="left:379.90px;top:232px;font-size:6.70px;transform:translateY(0.40px) scaleX(0.933);color:#000;">3.7 MiB</div>
<div class="t" style="left:423.10px;top:232px;font-size:6.70px;transform:translateY(0.40px) scaleX(0.965);color:#000;">/home/faster/Pictures/samples</div>
<div class="r" style="left:209.80px;top:240.97px;width:504.50px;height:10.57px;background:#f7f7f7;"></div>
<svg style="left:212px;top:243.57px" width="6" height="6" viewBox="0 0 6 6"><rect x="0.3" y="0.3" width="5.2" height="5.2" rx="0.6" fill="#e4f2fa" stroke="#a8d6f0" stroke-width="0.5"/><path d="M1.3 2.9 L2.4 4 L4.6 1.6" stroke="#1b1e20" stroke-width="1.1" fill="none"/></svg>
<div class="t" style="left:291.20px;top:242px;font-size:6.70px;transform:translateY(0.97px) scaleX(0.886);color:#000;">IMG_2849_c…</div>
<div class="t" style="left:335.30px;top:242px;font-size:6.70px;transform:translateY(0.97px) scaleX(0.933);color:#000;">webp</div>
<div class="t" style="left:379.90px;top:242px;font-size:6.70px;transform:translateY(0.97px) scaleX(0.933);color:#000;">185.9 KiB</div>
<div class="t" style="left:423.10px;top:242px;font-size:6.70px;transform:translateY(0.97px) scaleX(0.965);color:#000;">/home/faster/Pictures/samples</div>
<div class="r" style="left:209.80px;top:251.55px;width:504.50px;height:10.57px;background:#76c4ee;"></div>
<div class="r" style="left:209.80px;top:251.55px;width:504.50px;height:0.80px;background:#64b9e8;"></div>
<svg style="left:212.5px;top:254.75px" width="5" height="5" viewBox="0 0 5 5"><path d="M0.6 2.5 L1.8 3.7 L4.2 1.1" stroke="#1b1e20" stroke-width="1.2" fill="none"/></svg>
<div class="t" style="left:291.20px;top:253px;font-size:6.70px;transform:translateY(0.55px) scaleX(0.886);color:#000;">IMG_2849-2_…</div>
<div class="t" style="left:335.30px;top:253px;font-size:6.70px;transform:translateY(0.55px) scaleX(0.933);color:#000;">webp</div>
<div class="t" style="left:379.90px;top:253px;font-size:6.70px;transform:translateY(0.55px) scaleX(0.933);color:#000;">213.6 KiB</div>
<div class="t" style="left:423.10px;top:253px;font-size:6.70px;transform:translateY(0.55px) scaleX(0.965);color:#000;">/home/faster/Pictures/samples</div>
<div class="r" style="left:209.80px;top:262.12px;width:504.50px;height:10.57px;background:#76c4ee;"></div>
<div class="r" style="left:209.80px;top:271.90px;width:504.50px;height:0.80px;background:#64b9e8;"></div>
<svg style="left:212.5px;top:265.32px" width="5" height="5" viewBox="0 0 5 5"><path d="M0.6 2.5 L1.8 3.7 L4.2 1.1" stroke="#1b1e20" stroke-width="1.2" fill="none"/></svg>
<div class="t" style="left:291.20px;top:264px;font-size:6.70px;transform:translateY(0.12px) scaleX(0.886);color:#000;">IMG_2849-2.j…</div>
<div class="t" style="left:335.30px;top:264px;font-size:6.70px;transform:translateY(0.12px) scaleX(0.933);color:#000;">jpg</div>
<div class="t" style="left:379.90px;top:264px;font-size:6.70px;transform:translateY(0.12px) scaleX(0.933);color:#000;">3.8 MiB</div>
<div class="t" style="left:423.10px;top:264px;font-size:6.70px;transform:translateY(0.12px) scaleX(0.965);color:#000;">/home/faster/Pictures/samples</div>
<div class="r" style="left:209.80px;top:272.70px;width:504.50px;height:9.50px;background:#ffffff;"></div>
<svg style="left:212px;top:275.30px" width="6" height="6" viewBox="0 0 6 6"><rect x="0.3" y="0.3" width="5.2" height="5.2" rx="0.6" fill="#e4f2fa" stroke="#a8d6f0" stroke-width="0.5"/><path d="M1.3 2.9 L2.4 4 L4.6 1.6" stroke="#1b1e20" stroke-width="1.1" fill="none"/></svg>
<div class="t" style="left:291.20px;top:274px;font-size:6.70px;transform:translateY(0.70px) scaleX(0.886);color:#000;">IMG_2826.jpg</div>
<div class="t" style="left:335.30px;top:274px;font-size:6.70px;transform:translateY(0.70px) scaleX(0.933);color:#000;">jpg</div>
<div class="t" style="left:379.90px;top:274px;font-size:6.70px;transform:translateY(0.70px) scaleX(0.933);color:#000;">7.0 MiB</div>
<div class="t" style="left:423.10px;top:274px;font-size:6.70px;transform:translateY(0.70px) scaleX(0.965);color:#000;">/home/faster/Pictures/samples</div>
</div>
<div class="r" style="left:209.35px;top:48.05px;width:512.60px;height:234.90px;border:1px solid #8ccbed;"></div>
<div class="r" style="left:716.15px;top:50.35px;width:4.30px;height:131.70px;background:#a9d8f3;border:0.6px solid #7fc4ec;border-radius:2px;"></div>
<div class="r" style="left:209.55px;top:285.05px;width:512.20px;height:50.40px;background:#f2f3f3;border:1px solid #d1d3d4;border-radius:1.5px;"></div>
<div class="t" style="left:438.00px;top:287px;font-size:6.70px;transform:translateY(0.90px) scaleX(0.933);color:#000;">Conversion Formats</div>
<div class="t" style="left:212.40px;top:302px;font-size:6.70px;transform:translateY(0.90px) scaleX(0.933);color:#000;">Convert to:</div>
<div class="r" style="left:246.05px;top:299.85px;width:420.70px;height:13.10px;background:#fcfcfc;border:1px solid #c7c9cb;border-radius:1.5px;"></div>
<div class="t" style="left:248.30px;top:302px;font-size:6.70px;transform:translateY(0.90px) scaleX(0.933);color:#000;">PNG - (Portable Network Graphics)</div>
<svg style="left:661.5px;top:304.5px" width="4" height="3" viewBox="0 0 4 3"><path d="M0.3 0.6 L2 2.2 L3.7 0.6" stroke="#4a4d50" stroke-width="0.7" fill="none"/></svg>
<div class="r" style="left:668.95px;top:299.35px;width:50.30px;height:13.70px;background:#fcfcfc;border:1px solid #c7c9cb;border-radius:1.5px;"></div>
<div class="t" style="left:671.70px;top:302px;font-size:6.70px;transform:translateY(0.90px) scaleX(0.933);color:#000;">Images settings</div>
<div class="r" style="left:212.00px;top:316.40px;width:507.00px;height:0.80px;background:#d7d9da;"></div>
<svg style="left:566.00px;top:322.70px" width="7" height="7" viewBox="0 0 7 7"><rect x="0.4" y="0.4" width="5.4" height="5.4" rx="0.7" fill="#fdfdfd" stroke="#c3c5c7" stroke-width="0.75"/></svg>
<div class="t" style="left:574.70px;top:322px;font-size:6.70px;transform:translateY(0.60px) scaleX(0.933);color:#000;">Replace transparent background</div>
<div class="r" style="left:670.85px;top:318.65px;width:48.40px;height:14.00px;background:#fcfcfc;border:1px solid #c7c9cb;border-radius:1.5px;"></div>
<div class="r" style="left:673.20px;top:324.00px;width:5.60px;height:4.00px;background:#000;"></div>
<div class="t" style="left:680.00px;top:322px;font-size:6.70px;transform:translateY(0.60px) scaleX(0.933);color:#000;">Choose color</div>
<div class="r" style="left:209.55px;top:338.05px;width:512.20px;height:68.90px;background:#f2f3f3;border:1px solid #d1d3d4;border-radius:1.5px;"></div>
<div class="t" style="left:444.60px;top:341px;font-size:6.70px;transform:translateY(0.00px) scaleX(0.933);color:#000;">Output options</div>
<div class="t" style="left:212.40px;top:353px;font-size:6.70px;transform:translateY(0.00px) scaleX(0.933);color:#000;">Save in:</div>
<div class="r" style="left:211.95px;top:363.55px;width:235.00px;height:13.30px;background:#fcfcfc;border:1px solid #c7c9cb;border-radius:1.5px;"></div>
<div class="t" style="left:215.00px;top:366px;font-size:6.70px;transform:translateY(0.60px) scaleX(0.979);color:#000;">/home/faster/converted_images</div>
<div class="r" style="left:449.75px;top:363.25px;width:13.30px;height:14.00px;background:#fcfcfc;border:1px solid #c7c9cb;border-radius:1.5px;"></div>
<div class="t" style="left:453.40px;top:366px;font-size:6.70px;transform:translateY(0.60px) scaleX(0.933);color:#000;">...</div>
<svg style="left:213.10px;top:381.40px" width="7" height="7" viewBox="0 0 7 7"><rect x="0.4" y="0.4" width="5.4" height="5.4" rx="0.7" fill="#fdfdfd" stroke="#c3c5c7" stroke-width="0.75"/></svg>
<div class="t" style="left:220.60px;top:381px;font-size:6.70px;transform:translateY(0.40px) scaleX(0.933);color:#000;">Image's directory</div>
<div class="r" style="left:465.30px;top:352.00px;width:0.80px;height:52.20px;background:#d7d9da;"></div>
<svg style="left:469.10px;top:353.90px" width="7" height="7" viewBox="0 0 7 7"><rect x="0.4" y="0.4" width="5.4" height="5.4" rx="0.7" fill="#fdfdfd" stroke="#c3c5c7" stroke-width="0.75"/></svg>
<div class="t" style="left:477.10px;top:353px;font-size:6.70px;transform:translateY(0.60px) scaleX(0.933);color:#000;font-weight:bold;">Rename:</div>
<svg style="left:469.6px;top:366.8px" width="5" height="5" viewBox="0 0 5 5"><circle cx="2.3" cy="2.3" r="2" fill="#f0f0f0" stroke="#d5d6d7" stroke-width="0.5"/><circle cx="2.3" cy="2.3" r="0.8" fill="#b5b7b9"/></svg>
<div class="t" style="left:477.10px;top:365px;font-size:6.70px;transform:translateY(0.60px) scaleX(0.933);color:#a3a5a8;">Prefix/Suffix</div>
<svg style="left:596px;top:366.8px" width="5" height="5" viewBox="0 0 5 5"><circle cx="2.3" cy="2.3" r="2" fill="#f0f0f0" stroke="#d5d6d7" stroke-width="0.5"/></svg>
<div class="t" style="left:604.00px;top:365px;font-size:6.70px;transform:translateY(0.60px) scaleX(0.933);color:#a3a5a8;">Progressive Number</div>
<div class="r" style="left:468.85px;top:376.25px;width:187.10px;height:13.00px;background:#eff0f0;border:1px solid #d8d9da;border-radius:1.5px;"></div>
<div class="t" style="left:471.50px;top:379px;font-size:6.70px;transform:translateY(0.30px) scaleX(0.933);color:#a3a5a8;">#_copy</div>
<div class="t" style="left:658.00px;top:379px;font-size:6.70px;transform:translateY(0.30px) scaleX(0.933);color:#a3a5a8;">Start with:</div>
<div class="r" style="left:688.55px;top:375.85px;width:31.30px;height:13.40px;background:#eff0f0;border:1px solid #d8d9da;border-radius:1.5px;"></div>
<div class="t" style="left:692.00px;top:379px;font-size:6.70px;transform:translateY(0.30px) scaleX(0.933);color:#a3a5a8;">1</div>
<svg style="left:713px;top:378.5px" width="4" height="8" viewBox="0 0 4 8"><path d="M0.5 3 L2 1.5 L3.5 3 M0.5 5 L2 6.5 L3.5 5" stroke="#b8babc" stroke-width="0.6" fill="none"/></svg>
<div class="r" style="left:469.00px;top:391.00px;width:250.40px;height:0.80px;background:#d7d9da;"></div>
<svg style="left:468.90px;top:396.60px" width="7" height="7" viewBox="0 0 7 7"><rect x="0.4" y="0.4" width="5.4" height="5.4" rx="0.7" fill="#c4e5f8" stroke="#9dd3f3" stroke-width="0.75"/><path d="M1.6 3.1 L2.7 4.2 L4.7 1.9" stroke="#1b1e20" stroke-width="1.15" fill="none"/></svg>
<div class="t" style="left:477.10px;top:396px;font-size:6.70px;transform:translateY(0.40px) scaleX(0.933);color:#000;">Overwrite all</div>
</body></html>
